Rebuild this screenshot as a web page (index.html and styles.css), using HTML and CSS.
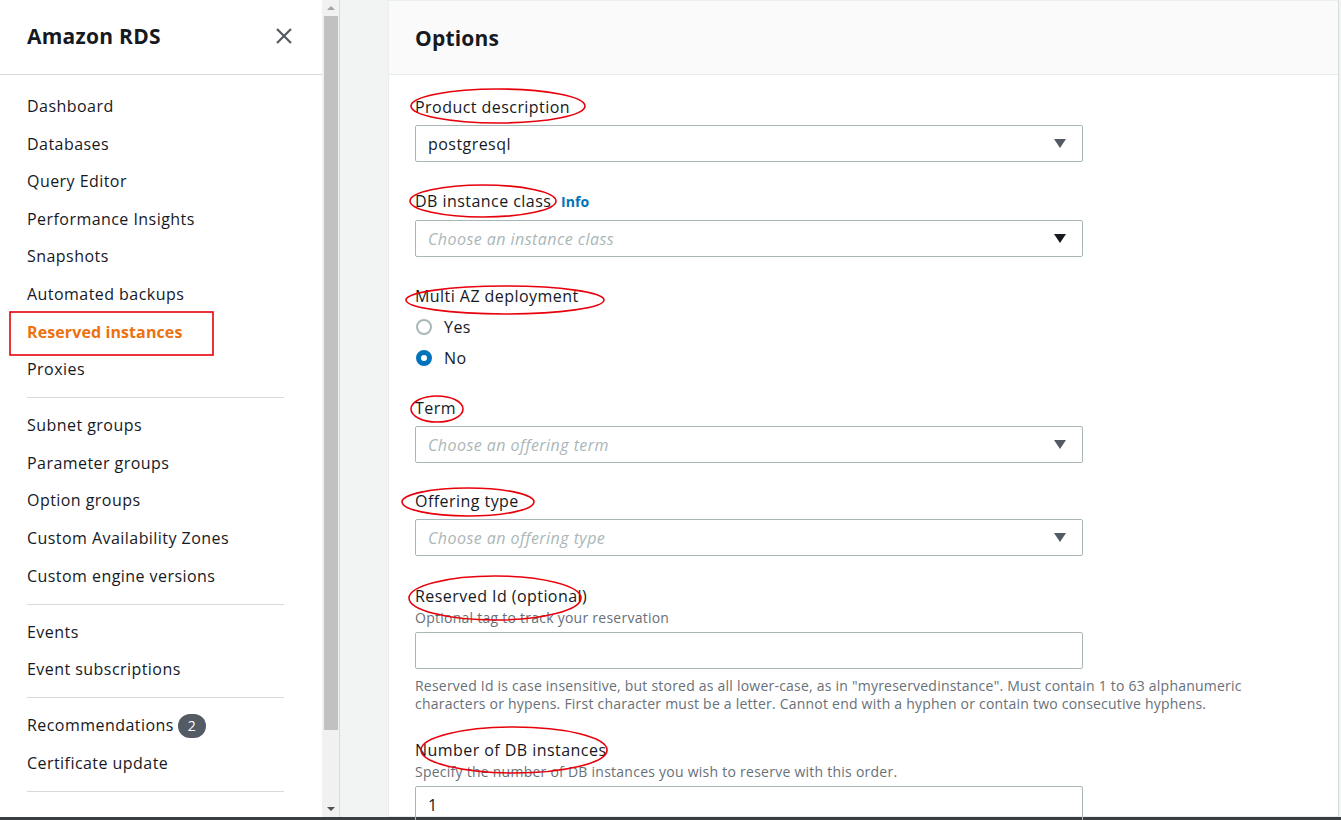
FILE: index.html
```html
<!DOCTYPE html>
<html>
<head>
<meta charset="utf-8">
<link rel="stylesheet" href="styles.css">
</head>
<body>
<div class="app">
  <aside class="sidebar">
    <div class="side-head">
      <span class="brand">Amazon RDS</span>
      <svg class="close" width="18" height="18" viewBox="0 0 18 18"><path d="M2 2 L16 16 M16 2 L2 16" stroke="#545b64" stroke-width="2.2" fill="none"/></svg>
    </div>
    <ul class="nav">
      <li>Dashboard</li>
      <li>Databases</li>
      <li>Query Editor</li>
      <li>Performance Insights</li>
      <li>Snapshots</li>
      <li>Automated backups</li>
      <li class="active">Reserved instances</li>
      <li>Proxies</li>
    </ul>
    <div class="divider"></div>
    <ul class="nav">
      <li>Subnet groups</li>
      <li>Parameter groups</li>
      <li>Option groups</li>
      <li>Custom Availability Zones</li>
      <li>Custom engine versions</li>
    </ul>
    <div class="divider"></div>
    <ul class="nav">
      <li>Events</li>
      <li>Event subscriptions</li>
    </ul>
    <div class="divider"></div>
    <ul class="nav">
      <li>Recommendations <span class="badge">2</span></li>
      <li>Certificate update</li>
    </ul>
    <div class="divider"></div>
  </aside>
  <div class="scrollbar">
    <div class="sb-arrow up"></div>
    <div class="sb-thumb"></div>
    <div class="sb-arrow down"></div>
  </div>
  <main class="main">
    <section class="card">
      <header class="card-head">Options</header>
      <div class="card-body">
        <div class="field">
          <div class="label">Product description</div>
          <div class="select"><span class="val">postgresql</span><span class="caret"></span></div>
        </div>
        <div class="field">
          <div class="label">DB instance class <a class="info">Info</a></div>
          <div class="select"><span class="ph">Choose an instance class</span><span class="caret dark"></span></div>
        </div>
        <div class="field">
          <div class="label">Multi AZ deployment</div>
          <div class="radios">
            <div class="radio"><span class="dot"></span>Yes</div>
            <div class="radio"><span class="dot on"></span>No</div>
          </div>
        </div>
        <div class="field term">
          <div class="label">Term</div>
          <div class="select"><span class="ph">Choose an offering term</span><span class="caret"></span></div>
        </div>
        <div class="field offering">
          <div class="label">Offering type</div>
          <div class="select"><span class="ph">Choose an offering type</span><span class="caret"></span></div>
        </div>
        <div class="field">
          <div class="label">Reserved Id (optional)</div>
          <div class="desc">Optional tag to track your reservation</div>
          <div class="input"></div>
          <div class="help">Reserved Id is case insensitive, but stored as all lower-case, as in "myreservedinstance". Must contain 1 to 63 alphanumeric<br>characters or hypens. First character must be a letter. Cannot end with a hyphen or contain two consecutive hyphens.</div>
        </div>
        <div class="field">
          <div class="label">Number of DB instances</div>
          <div class="desc">Specify the number of DB instances you wish to reserve with this order.</div>
          <div class="input"><span class="val">1</span></div>
        </div>
      </div>
    </section>
  </main>
</div>
<div class="taskbar"></div>
<svg class="marks" width="1341" height="820" viewBox="0 0 1341 820">
  <g fill="none" stroke="#e8000b" stroke-width="1.6">
    <rect x="10" y="312" width="203" height="43"/>
    <ellipse cx="498" cy="106" rx="87" ry="17"/>
    <ellipse cx="483" cy="201" rx="73" ry="16"/>
    <ellipse cx="505" cy="300" rx="99" ry="14"/>
    <ellipse cx="437" cy="409" rx="26" ry="13"/>
    <ellipse cx="468" cy="502" rx="66" ry="14"/>
    <ellipse cx="495" cy="598" rx="86" ry="22"/>
    <ellipse cx="514" cy="750" rx="93" ry="23"/>
  </g>
</svg>
</body>
</html>
```

FILE: styles.css
```css
* { box-sizing: border-box; }
html, body { margin: 0; padding: 0; }
body {
  width: 1341px;
  height: 820px;
  overflow: hidden;
  font-family: "Open Sans", "Noto Sans", sans-serif;
  color: #16191f;
  background: #f2f3f3;
  position: relative;
}
.app {
  display: flex;
  height: 817px;
}
.sidebar {
  width: 322px;
  flex: none;
  background: #fff;
  overflow: hidden;
}
.side-head {
  height: 75px;
  border-bottom: 1px solid #d5dbdb;
  display: flex;
  align-items: center;
  justify-content: space-between;
  padding: 0 29px 0 27px;
}
.brand {
  font-weight: 700;
  font-size: 21px;
  letter-spacing: 0.25px;
  margin-top: -2px;
}
.close { margin-top: -2px; }
.nav {
  list-style: none;
  margin: 0;
  padding: 0 0 0 27px;
  letter-spacing: 0.45px;
}
.sidebar .side-head + .nav { padding-top: 13px; }
.nav li {
  height: 37.6px;
  line-height: 37.6px;
  font-size: 16px;
  display: flex;
  align-items: center;
}
.nav li.active {
  color: #ec7211;
  font-weight: 700;
  letter-spacing: 0.1px;
}
.divider {
  height: 1px;
  background: #d5dbdb;
  margin: 8.5px 38px 9px 27px;
}
.badge {
  display: inline-flex;
  align-items: center;
  justify-content: center;
  width: 28px;
  height: 24px;
  border-radius: 12px;
  background: #545b64;
  color: #fff;
  font-size: 14px;
  margin-left: 4px;
  line-height: 1;
  letter-spacing: 0;
}
.scrollbar {
  width: 18px;
  flex: none;
  background: #f1f1f1;
  border-right: 1px solid #d5dbdb;
  display: flex;
  flex-direction: column;
  align-items: center;
  padding: 0 1px;
}
.sb-arrow {
  height: 16px;
  width: 100%;
  display: flex;
  align-items: center;
  justify-content: center;
}
.sb-arrow::after {
  content: "";
  border-left: 4px solid transparent;
  border-right: 4px solid transparent;
}
.sb-arrow.up::after { border-bottom: 4px solid #a3a3a3; }
.sb-arrow.down { margin-top: auto; }
.sb-arrow.down::after { border-top: 4px solid #505050; }
.sb-thumb {
  width: 14px;
  height: 714px;
  background: #c1c1c1;
}
.main {
  flex: 1;
  padding-left: 48px;
  padding-right: 2px;
}
.card {
  background: #fff;
  border: 1px solid #eaeded;
  border-right-color: #d5dbdb;
  height: 100%;
}
.card-head {
  height: 74px;
  background: #fafafa;
  border-bottom: 1px solid #eaeded;
  font-size: 21px;
  font-weight: 700;
  letter-spacing: 0.2px;
  padding: 23px 26px 0;
  line-height: 28px;
}
.card-body {
  padding: 21px 26px 0;
  letter-spacing: 0.45px;
}
.field { margin-bottom: 28px; }
.field.term { margin-top: 0; margin-bottom: 27px; }
.field.offering { margin-bottom: 29px; }
.label {
  font-size: 16px;
  line-height: 22px;
  margin-bottom: 7px;
}
.info {
  color: #0073bb;
  font-weight: 700;
  font-size: 14px;
  margin-left: 5px;
  letter-spacing: 0.1px;
}
.select, .input {
  width: 668px;
  height: 37px;
  border: 1px solid #aab7b8;
  border-radius: 2px;
  display: flex;
  align-items: center;
  justify-content: space-between;
  padding: 0 16px 0 12px;
  font-size: 16px;
}
.ph {
  color: #aab7b8;
  font-style: italic;
}
.caret {
  width: 0;
  height: 0;
  border-left: 6.5px solid transparent;
  border-right: 6.5px solid transparent;
  border-top: 9px solid #545b64;
}
.caret.dark { border-top-color: #16191f; }
.radios { margin-top: -3px; }
.radio {
  display: flex;
  align-items: center;
  height: 31px;
  font-size: 16px;
}
.dot {
  width: 16px;
  height: 16px;
  border-radius: 50%;
  border: 2px solid #aab7b8;
  margin: 0 12px 0 1px;
}
.dot.on {
  border: 5px solid #0073bb;
  background: #fff;
}
.field:has(.radios) { margin-bottom: 24px; }
.desc {
  font-size: 14px;
  line-height: 20px;
  color: #687078;
  margin-top: -6px;
  margin-bottom: 4px;
  letter-spacing: 0.25px;
}
.help {
  font-size: 14px;
  line-height: 18px;
  color: #687078;
  margin-top: 8px;
  letter-spacing: 0.22px;
}
.field:has(.help) { margin-bottom: 26px; }
.taskbar {
  height: 3px;
  background: #3a3d41;
}
.marks {
  position: absolute;
  left: 0;
  top: 0;
  pointer-events: none;
}
```
